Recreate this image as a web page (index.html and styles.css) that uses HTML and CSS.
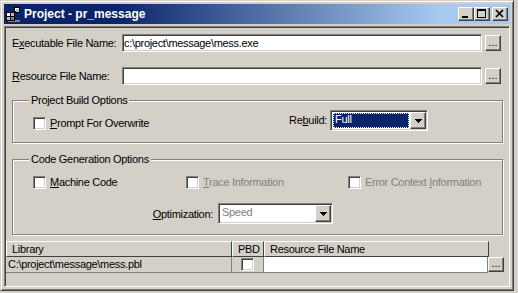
FILE: index.html
```html
<!DOCTYPE html>
<html lang="en">

<head>
    <meta charset="UTF-8">
    <title>Project - pr_message</title>
    <link rel="stylesheet" href="styles.css">
</head>

<body>
    <div class="window">
        <div class="titlebar">
            <svg class="title-icon" width="16" height="16" viewBox="0 0 16 16" shape-rendering="crispEdges">
                <rect x="3" y="14" width="12" height="2" fill="#808080" />
                <rect x="9.5" y="1.5" width="5" height="5" fill="#c0c0c0" stroke="#000" />
                <path d="M10.5 5.5v-3h3" stroke="#fff" fill="none" />
                <rect x="1.5" y="6.5" width="4" height="4" fill="#fff" stroke="#000" />
                <rect x="5.5" y="6.5" width="4" height="4" fill="#c0c0c0" stroke="#000" />
                <rect x="1.5" y="10.5" width="4" height="4" fill="#c0c0c0" stroke="#000" />
                <rect x="5.5" y="10.5" width="4" height="4" fill="#808080" stroke="#000" />
                <path d="M9.5 6.5l1-1" stroke="#000" fill="none" />
            </svg>
            <span class="title-text">Project - pr_message</span>
            <div class="caption-buttons">
                <div class="cap-btn">
                    <svg width="14" height="12" viewBox="0 0 14 12" shape-rendering="crispEdges">
                        <rect x="3" y="8" width="6" height="2" fill="#000" />
                    </svg>
                </div>
                <div class="cap-btn">
                    <svg width="14" height="12" viewBox="0 0 14 12" shape-rendering="crispEdges">
                        <rect x="2.5" y="1.5" width="8" height="8" fill="none" stroke="#000" />
                        <rect x="2" y="1" width="9" height="2" fill="#000" />
                    </svg>
                </div>
                <div class="cap-btn close">
                    <svg width="14" height="12" viewBox="0 0 14 12">
                        <path d="M3 2l7 7M10 2l-7 7" stroke="#000" stroke-width="1.7" fill="none" />
                    </svg>
                </div>
            </div>
        </div>

        <div class="client">
            <div class="field-row">
                <span class="field-label">E<u>x</u>ecutable File Name:</span>
                <div class="textbox">c:\project\message\mess.exe</div>
                <div class="dots-btn">...</div>
            </div>
            <div class="field-row second">
                <span class="field-label"><u>R</u>esource File Name:</span>
                <div class="textbox"></div>
                <div class="dots-btn">...</div>
            </div>

            <fieldset class="group build">
                <legend>Project Build Options</legend>
                <div class="build-row">
                    <label class="check-item wide">
                        <span class="check-box"></span>
                        <span class="check-text"><u>P</u>rompt For Overwrite</span>
                    </label>
                    <span class="rebuild-label">Re<u>b</u>uild:</span>
                    <div class="combo rebuild">
                        <div class="combo-value">
                            <span class="combo-selected">Full</span>
                        </div>
                        <div class="combo-btn">
                            <svg width="7" height="4" viewBox="0 0 7 4" shape-rendering="crispEdges">
                                <path d="M0 0h7v1h-1v1h-1v1h-1v1h-1v-1h-1v-1h-1v-1h-1z" fill="#000" />
                            </svg>
                        </div>
                    </div>
                </div>
            </fieldset>

            <fieldset class="group codegen">
                <legend>Code Generation Options</legend>
                <div class="check-row">
                    <label class="check-item machine">
                        <span class="check-box"></span>
                        <span class="check-text"><u>M</u>achine Code</span>
                    </label>
                    <label class="check-item trace disabled">
                        <span class="check-box"></span>
                        <span class="check-text"><u>T</u>race Information</span>
                    </label>
                    <label class="check-item disabled">
                        <span class="check-box"></span>
                        <span class="check-text">Error Context <u>I</u>nformation</span>
                    </label>
                </div>
                <div class="opt-row">
                    <span class="opt-label"><u>O</u>ptimization:</span>
                    <div class="combo speed">
                        <div class="combo-value disabled">Speed</div>
                        <div class="combo-btn">
                            <svg width="7" height="4" viewBox="0 0 7 4" shape-rendering="crispEdges">
                                <path d="M0 0h7v1h-1v1h-1v1h-1v1h-1v-1h-1v-1h-1v-1h-1z" fill="#000" />
                            </svg>
                        </div>
                    </div>
                </div>
            </fieldset>

            <div class="grid">
                <div class="grid-head">
                    <div class="head-cell col-lib">Library</div>
                    <div class="head-cell col-pbd">PBD</div>
                    <div class="head-cell col-res">Resource File Name</div>
                </div>
                <div class="grid-row">
                    <div class="row-cell col-lib">C:\project\message\mess.pbl</div>
                    <div class="row-cell col-pbd"><span class="check-box"></span></div>
                    <div class="row-cell col-res res-edit"></div>
                    <div class="dots-btn small">...</div>
                </div>
            </div>
        </div>
    </div>
</body>

</html>
```

FILE: styles.css
```css
body {
    margin: 0;
    background: #d4d0c8;
    font-family: "Liberation Sans", Arial, sans-serif;
    font-size: 11px;
    letter-spacing: -0.3px;
    color: #000;
}

u {
    text-decoration-thickness: 1px;
    text-underline-offset: 1px;
}

/* window frame */
.window {
    width: 514px;
    height: 291px;
    box-sizing: border-box;
    border: 1px solid;
    border-color: #d4d0c8 #404040 #404040 #d4d0c8;
    box-shadow: inset 1px 1px #fff, inset -1px -1px #808080;
    padding: 3px;
}

.titlebar {
    height: 20px;
    display: flex;
    align-items: center;
    padding: 0 2px 0 1px;
    background: linear-gradient(to right, #0a246a 0%, #0a246a 22%, #a6caf0 86%, #a6caf0 100%);
    color: #fff;
}

.title-icon {
    margin-right: 3px;
    flex: none;
}

.title-text {
    font-size: 12px;
    font-weight: bold;
    letter-spacing: 0;
}

.caption-buttons {
    margin-left: auto;
    display: flex;
}

.cap-btn {
    width: 16px;
    height: 14px;
    box-sizing: border-box;
    background: #d4d0c8;
    border: 1px solid;
    border-color: #fff #404040 #404040 #fff;
    box-shadow: inset -1px -1px #808080;
}

.cap-btn svg {
    display: block;
}

.cap-btn.close {
    margin-left: 2px;
}

/* client area */
.client {
    margin-top: 2px;
    height: 261px;
    box-sizing: border-box;
    border: 1px solid;
    border-color: #808080 #fff #fff #808080;
    box-shadow: inset 1px 1px #404040, inset -1px -1px #d4d0c8;
    padding: 1px;
}

.field-row {
    display: flex;
    align-items: center;
    height: 18px;
    margin: 6px 0 0 6px;
}

.field-row.second {
    margin-top: 15px;
}

.field-label {
    width: 110px;
}

.textbox {
    width: 360px;
    height: 18px;
    box-sizing: border-box;
    background: #fff;
    border: 1px solid;
    border-color: #808080 #fff #fff #808080;
    box-shadow: inset 1px 1px #404040, inset -1px -1px #d4d0c8;
    padding: 2px 1px;
    line-height: 13px;
    white-space: nowrap;
    overflow: hidden;
}

.dots-btn {
    width: 16px;
    height: 16px;
    box-sizing: border-box;
    margin-left: 3px;
    background: #d4d0c8;
    border: 1px solid;
    border-color: #fff #404040 #404040 #fff;
    box-shadow: inset -1px -1px #808080;
    text-align: center;
    line-height: 12px;
    letter-spacing: 0;
}

/* group boxes */
.group {
    margin: 9px 0 0 6px;
    width: 491px;
    box-sizing: border-box;
    border: 1px solid #808080;
    box-shadow: inset 1px 1px #fff, 1px 1px #fff;
    padding: 3px 0 11px 16px;
}

.group legend {
    padding: 0 2px;
    line-height: 13px;
    background: #d4d0c8;
}

.group.codegen {
    margin-top: 10px;
    padding: 10px 0 10px 16px;
}

.build-row {
    display: flex;
    align-items: flex-start;
    margin-left: 4px;
}

.check-item {
    display: flex;
    align-items: center;
    height: 13px;
}

.check-item.wide {
    width: 250px;
    margin-top: 7px;
}

.check-text {
    margin-left: 4px;
    line-height: 13px;
}

.check-box {
    display: block;
    width: 13px;
    height: 13px;
    box-sizing: border-box;
    background: #fff;
    border: 1px solid;
    border-color: #808080 #fff #fff #808080;
    box-shadow: inset 1px 1px #404040, inset -1px -1px #d4d0c8;
}

.disabled {
    color: #808080;
}

.rebuild-label {
    width: 47px;
    box-sizing: border-box;
    padding-right: 3px;
    text-align: right;
    line-height: 21px;
}

.combo {
    display: flex;
    height: 21px;
    box-sizing: border-box;
    background: #fff;
    border: 1px solid;
    border-color: #808080 #fff #fff #808080;
    box-shadow: inset 1px 1px #404040, inset -1px -1px #d4d0c8;
    padding: 1px;
}

.combo.rebuild {
    width: 98px;
}

.combo.speed {
    width: 115px;
}

.combo-value {
    flex: 1;
    padding: 1px;
    line-height: 13px;
}

.combo-value.disabled {
    padding: 1px 2px;
}

.combo-selected {
    display: block;
    height: 100%;
    background: #0a246a;
    color: #fff;
    outline: 1px dotted #fff;
    outline-offset: -1px;
    padding-left: 2px;
}

.combo-btn {
    width: 16px;
    box-sizing: border-box;
    background: #d4d0c8;
    border: 1px solid;
    border-color: #fff #404040 #404040 #fff;
    box-shadow: inset -1px -1px #808080;
    display: flex;
    align-items: center;
    justify-content: center;
}

.combo-btn svg {
    display: block;
    margin-top: 1px;
}

.check-row {
    display: flex;
    margin-left: 4px;
}

.check-item.machine {
    width: 153px;
}

.check-item.trace {
    width: 162px;
}

.opt-row {
    display: flex;
    align-items: center;
    margin: 14px 0 0 4px;
}

.opt-label {
    width: 185px;
    box-sizing: border-box;
    padding-right: 5px;
    text-align: right;
}

/* library grid */
.grid {
    margin-top: 6px;
}

.grid-head,
.grid-row {
    display: flex;
    height: 16px;
}

.head-cell,
.row-cell {
    box-sizing: border-box;
    height: 16px;
    line-height: 14px;
    white-space: nowrap;
}

.head-cell {
    border-top: 1px solid #fff;
    border-left: 1px solid #fff;
    border-right: 1px solid #404040;
    border-bottom: 1px solid #404040;
    padding-left: 5px;
}

.row-cell {
    border-right: 1px solid #808080;
    border-bottom: 1px solid #808080;
    padding-left: 2px;
}

.col-lib {
    width: 226px;
}

.col-pbd {
    width: 32px;
}

.row-cell.col-pbd {
    display: flex;
    align-items: center;
    justify-content: center;
    padding: 0;
}

.col-res {
    width: 225px;
}

.res-edit {
    width: 224px;
    background: #fff;
}

.dots-btn.small {
    height: 15px;
    margin-left: 0;
    line-height: 11px;
}
```
